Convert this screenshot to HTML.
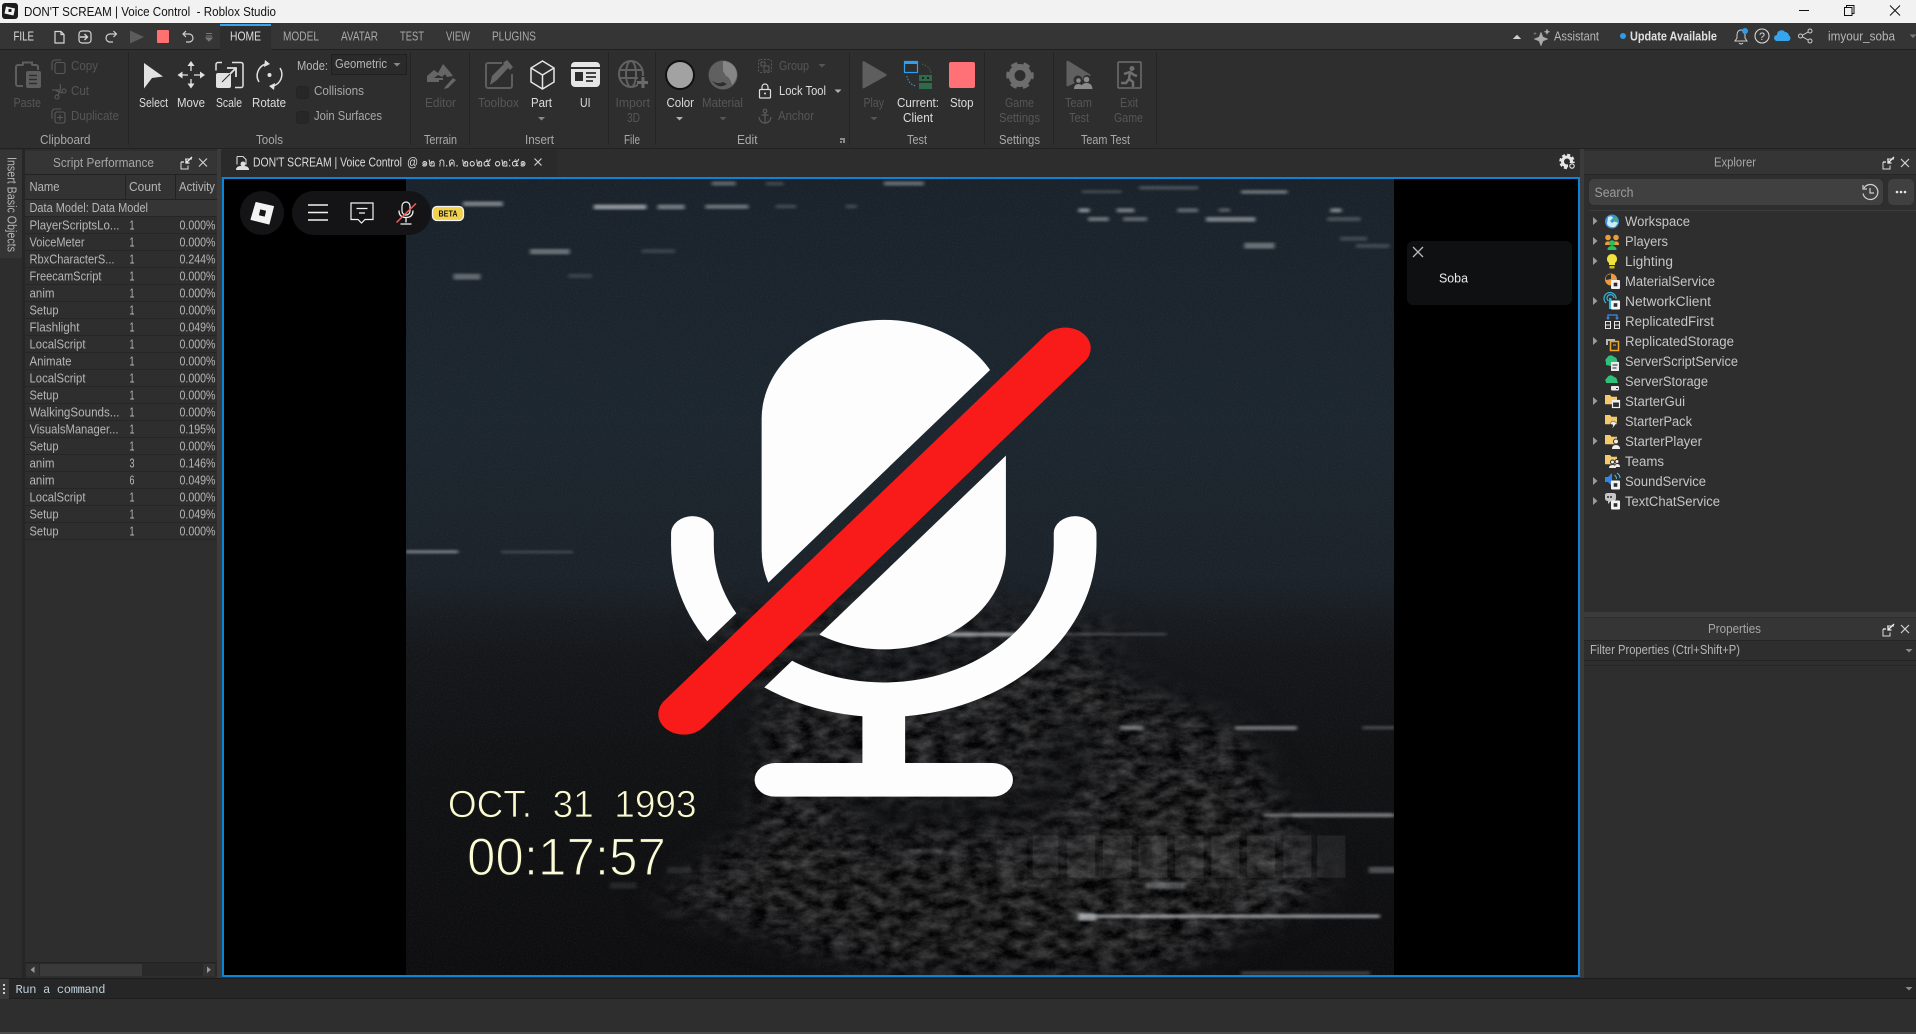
<!DOCTYPE html>
<html lang="en"><head><meta charset="utf-8"><title>DON'T SCREAM | Voice Control - Roblox Studio</title>
<style>
html,body{margin:0;padding:0;background:#2e2e2e;width:1916px;height:1034px;overflow:hidden}
svg{display:block}
text{font-family:"Liberation Sans","Noto Sans CJK SC",sans-serif;font-size:12.5px;fill:#a8a8a8;white-space:pre}
.w{fill:#dcdcdc}.d{fill:#565656}.l{fill:#a9a9a9}.b{fill:#b6b6b6}.e{fill:#c6c6c6;font-size:13.5px}.h{fill:#a6a6a6;font-size:13px}
.sep{fill:#242424}
</style></head><body>
<svg xmlns="http://www.w3.org/2000/svg" width="1916" height="1034" viewBox="0 0 1916 1034">
<defs>
<linearGradient id="bg" x1="0" y1="0" x2="0" y2="1">
<stop offset="0" stop-color="#19222b"/><stop offset=".3" stop-color="#1c262f"/><stop offset=".5" stop-color="#1b2229"/><stop offset=".6" stop-color="#141619"/><stop offset=".72" stop-color="#111214"/><stop offset="1" stop-color="#0d0d0f"/>
</linearGradient>
<filter id="noise" x="0" y="0" width="100%" height="100%" color-interpolation-filters="sRGB"><feTurbulence type="fractalNoise" baseFrequency=".8" numOctaves="2" seed="4"/><feColorMatrix values="0 0 0 0 .5 0 0 0 0 .5 0 0 0 0 .5 1.2 0 0 0 -.52"/></filter>
<filter id="rock" x="0" y="0" width="100%" height="100%" color-interpolation-filters="sRGB"><feTurbulence type="fractalNoise" baseFrequency=".06 .1" numOctaves="5" seed="11"/><feColorMatrix values=".42 0 0 0 -.09 .42 0 0 0 -.09 .42 0 0 0 -.085 0 0 0 0 1"/></filter>
<filter id="b30"><feGaussianBlur stdDeviation="26"/></filter>
<filter id="b2"><feGaussianBlur stdDeviation="3 2.200"/></filter>
<mask id="rockMask" maskUnits="userSpaceOnUse" x="400" y="170" width="1000" height="810">
<g transform="translate(400 170) scale(.6378 .5166)" filter="url(#b30)">
<path fill="#fff" fill-opacity=".5" d="M470 880Q760 760 1130 880L1120 1000 560 1020Z"/>
<path fill="#fff" fill-opacity=".9" d="M560 1030L1060 960 1140 990 1320 1080 1460 1400 1200 1560 760 1560 400 1420 560 1260Z"/>
<path fill="#000" d="M660 1200H1000L920 1290H720Z"/>
<path fill="#000" fill-opacity=".7" d="M1040 1050L1110 1090 1020 1300 940 1250Z"/>
</g></mask>
<mask id="micCut" maskUnits="userSpaceOnUse" x="300" y="200" width="950" height="1100">
<rect x="300" y="200" width="950" height="1100" fill="#fff"/>
<path d="M1240 112L240 1296" stroke="#000" stroke-width="126"/>
</mask>
<clipPath id="ic"><rect x="406" y="179" width="988" height="796"/></clipPath>
<g id="badge"><rect x="-4.5" y="-4.5" width="9" height="9" rx="1" fill="#f2f2f2"/><rect x="-1.8" y="-1.8" width="3.6" height="3.6" fill="#2e2e2e"/></g>
<path id="folder" d="M0 0h5l1.5 1.8H12v7.4H0z" fill="#f3c96b"/>
<g id="float"><path d="M1 5v7h7V8.5M5 2h7" fill="none" stroke="#ddd" stroke-width="1"/><path d="M1 5h3M12 0L6 6M6 2.5V6h3.5" fill="none" stroke="#eee" stroke-width="1.3"/></g>
<path id="x" d="M0 0l8 8M8 0l-8 8" stroke="#cfcfcf" stroke-width="1.2" fill="none"/>
<path id="arr" d="M0 0l4.5 4-4.5 4z" fill="#9a9a9a"/>
<path id="dn" d="M-3.5 0h7l-3.500 3.500z"/>
</defs>

<!-- base -->
<rect width="1916" height="1034" fill="#2e2e2e"/>
<rect width="1916" height="23" fill="#f2f2f2"/>
<rect y="23" width="1916" height="26" fill="#353535"/>
<rect y="49" width="1916" height="1" fill="#202020"/>
<rect y="148" width="1916" height="1" fill="#222"/>

<!-- title bar -->
<rect x="2" y="3" width="16" height="16" rx="3" fill="#1b1b1b"/>
<path d="M6 6.500L15 8.500 13.500 15.500 4.500 13.500z" fill="#f2f2f2"/><rect x="8.500" y="9" width="3" height="3" fill="#1b1b1b"/>
<text x="24" y="16" textLength="252" lengthAdjust="spacingAndGlyphs" style="fill:#111;font-size:13px">DON'T SCREAM | Voice Control  - Roblox Studio</text>
<path d="M1799 10.500h10" stroke="#111" stroke-width="1"/>
<path d="M1844.500 7.500h7.500v8h-7.500zM1846.500 7V5.500h7.500v8h-2" fill="none" stroke="#111"/>
<path d="M1890 5.500l10 10M1900 5.500l-10 10" stroke="#111" stroke-width="1"/>

<!-- menu row -->
<text x="13.500" y="40.500" textLength="20.500" lengthAdjust="spacingAndGlyphs" class="w">FILE</text>
<path d="M55 31.500h6l3 3v8.500h-9zM61 31.500v3h3" fill="none" stroke="#d5d5d5" stroke-width="1.200"/>
<rect x="79" y="31" width="12" height="12" rx="3" fill="none" stroke="#d5d5d5" stroke-width="1.200"/><path d="M80 37h7M84.500 34l3 3-3 3" fill="none" stroke="#d5d5d5" stroke-width="1.400"/>
<path d="M116 34h-6a3.500 3.500 0 0 0 0 8h3M113.500 31l3 3-3 3" fill="none" stroke="#cfcfcf" stroke-width="1.200"/>
<path d="M130 30.500l14 6.500-14 6.500z" fill="#5c5c5c"/>
<rect x="157" y="30" width="12" height="13" rx="1" fill="#ff7070"/>
<path d="M183 34h6a3.500 3.500 0 0 1 0 8h-3M186 31l-3 3 3 3" fill="none" stroke="#cfcfcf" stroke-width="1.200"/>
<path d="M206 33.500h6M206 36h6M206 38l3 3 3-3z" stroke="#777" fill="#777"/>
<rect x="220" y="24" width="51" height="26" fill="#2e2e2e"/><rect x="220" y="24" width="51" height="2" fill="#35a5ee"/>
<text x="230" y="40.500" textLength="31" lengthAdjust="spacingAndGlyphs" class="w">HOME</text>
<text x="283" y="40.500" textLength="36" lengthAdjust="spacingAndGlyphs">MODEL</text>
<text x="341" y="40.500" textLength="37" lengthAdjust="spacingAndGlyphs">AVATAR</text>
<text x="400" y="40.500" textLength="24" lengthAdjust="spacingAndGlyphs">TEST</text>
<text x="446" y="40.500" textLength="24" lengthAdjust="spacingAndGlyphs">VIEW</text>
<text x="492" y="40.500" textLength="44" lengthAdjust="spacingAndGlyphs">PLUGINS</text>
<!-- right of menu -->
<path d="M1514 38.500l3-3 3 3z" fill="#cfcfcf" stroke="#cfcfcf"/>
<path d="M1541 32l2 5 5 2-5 2-2 5-2-5-5-2 5-2zM1547 29l.8 2 2 .8-2 .8-.8 2-.8-2-2-.8 2-.8zM1535 32v3M1533.500 33.500h3" fill="#aaa" stroke="#aaa" stroke-width=".4"/>
<text x="1554" y="40.500" textLength="45" lengthAdjust="spacingAndGlyphs" class="b">Assistant</text>
<circle cx="1623" cy="36" r="3" fill="#2f9bea"/>
<text x="1630" y="40.500" textLength="87" lengthAdjust="spacingAndGlyphs" style="fill:#e0e0e0;font-weight:700">Update Available</text>
<path d="M1741 30c-3 0-4 3-4 5v3l-2 3h12l-2-3v-3c0-2-1-5-4-5zM1739 43q2 2 4 0" fill="none" stroke="#cfcfcf"/><circle cx="1745" cy="31" r="3" fill="#2f9bea"/>
<circle cx="1762" cy="36" r="7" fill="none" stroke="#d5d5d5" stroke-width="1.100"/><text x="1759" y="40" textLength="6" lengthAdjust="spacingAndGlyphs" class="w" style="font-size:11px">?</text>
<path d="M1777 41a3 3 0 0 1 0-6 4.500 4.500 0 0 1 8-3 4 4 0 0 1 4 3.500 3 3 0 0 1-1 5.500z" fill="#35a5ee"/>
<path d="M1810 31l-9 5 9 5" fill="none" stroke="#cfcfcf"/><circle cx="1810" cy="31" r="2" fill="#353535" stroke="#cfcfcf"/><circle cx="1800.500" cy="36" r="2" fill="#353535" stroke="#cfcfcf"/><circle cx="1810" cy="41" r="2" fill="#353535" stroke="#cfcfcf"/>
<text x="1828" y="40.500" textLength="67" lengthAdjust="spacingAndGlyphs" class="b">imyour_soba</text>
<use href="#dn" x="1913" y="34.500" fill="#777"/>

<!-- ribbon separators -->
<rect class="sep" x="128" y="52" width="1" height="93"/><rect class="sep" x="410" y="52" width="1" height="93"/><rect class="sep" x="469" y="52" width="1" height="93"/><rect class="sep" x="608" y="52" width="1" height="93"/><rect class="sep" x="655" y="52" width="1" height="93"/><rect class="sep" x="849" y="52" width="1" height="93"/><rect class="sep" x="984" y="52" width="1" height="93"/><rect class="sep" x="1053" y="52" width="1" height="93"/><rect class="sep" x="1156" y="52" width="1" height="93"/>

<!-- clipboard -->
<g fill="none" stroke="#5e5e5e" stroke-width="2"><path d="M23 65h-5a2 2 0 0 0-2 2v17a2 2 0 0 0 2 2h5M32 65h4a2 2 0 0 1 2 2v3M23 65.500v-3h9v3"/></g>
<rect x="26" y="71" width="15" height="17" rx="2" fill="#5e5e5e"/><path d="M29 75.500h8M29 79.500h8M29 83.500h8" stroke="#2e2e2e" stroke-width="1.500"/>
<text x="13.500" y="107" textLength="27.500" lengthAdjust="spacingAndGlyphs" class="d">Paste</text>
<g fill="none" stroke="#5a5a5a" stroke-width="1.100"><rect x="55" y="62.500" width="10" height="11" rx="2"/><path d="M52 70v-7a3 3 0 0 1 3-3h6"/></g>
<text x="71" y="70" textLength="27" lengthAdjust="spacingAndGlyphs" class="d">Copy</text>
<g fill="none" stroke="#5a5a5a" stroke-width="1.100"><path d="M52 90h8M60 84c2 6-2 9-2 12M55 90l7 3"/><circle cx="57" cy="97" r="2"/><circle cx="64" cy="91" r="2"/></g>
<text x="71" y="95" textLength="18" lengthAdjust="spacingAndGlyphs" class="d">Cut</text>
<g fill="none" stroke="#5a5a5a" stroke-width="1.100"><rect x="55" y="112" width="10" height="11" rx="2"/><path d="M52 119v-7a3 3 0 0 1 3-3h6M60 114.500v6M57 117.500h6"/></g>
<text x="71" y="120" textLength="48" lengthAdjust="spacingAndGlyphs" class="d">Duplicate</text>
<text x="40" y="144" textLength="50.500" lengthAdjust="spacingAndGlyphs" class="l">Clipboard</text>

<!-- tools -->
<path d="M144 63L163 76.500 152 78 144 88.500z" fill="#e2e2e2"/>
<text x="139" y="107" textLength="29" lengthAdjust="spacingAndGlyphs" class="w">Select</text>
<g stroke="#e2e2e2" fill="none" stroke-width="1.300"><path d="M191 65v6M191 79v6M182 75h6M194 75h6"/></g><path d="M191 61l3.500 5h-7zM191 88.500l3.500-5h-7zM177.500 75l5-3.500v7zM205 75l-5-3.500v7z" fill="#e2e2e2"/>
<text x="177" y="107" textLength="28" lengthAdjust="spacingAndGlyphs" class="w">Move</text>
<path d="M222 62.500h-4a2 2 0 0 0-2 2v6M232 62.500h9a2 2 0 0 1 2 2v21a2 2 0 0 1-2 2h-6" fill="none" stroke="#e2e2e2" stroke-width="1.500"/>
<rect x="216" y="73" width="15" height="15" rx="2" fill="#e2e2e2"/><path d="M222 82l13-13M227 68h9v9" fill="none" stroke="#e2e2e2" stroke-width="1.800"/><path d="M222 82l8-8" stroke="#2e2e2e" stroke-width="1"/>
<text x="216" y="107" textLength="26" lengthAdjust="spacingAndGlyphs" class="w">Scale</text>
<path d="M259 82a12 12 0 0 1 7-18M280 68a12 12 0 0 1-7 18" fill="none" stroke="#e2e2e2" stroke-width="1.500"/><path d="M265 60l5 4-6 3zM274 90l-5-4 6-3z" fill="#e2e2e2"/><circle cx="269.500" cy="75" r="2" fill="#e2e2e2"/>
<text x="252" y="107" textLength="34" lengthAdjust="spacingAndGlyphs" class="w">Rotate</text>
<text x="297" y="70" textLength="31" lengthAdjust="spacingAndGlyphs" class="b">Mode:</text>
<rect x="331.500" y="54.500" width="75" height="20" fill="#2a2a2a" stroke="#202020"/>
<text x="335" y="68" textLength="52" lengthAdjust="spacingAndGlyphs" class="b">Geometric</text><use href="#dn" x="397" y="63" fill="#888"/>
<rect x="296.500" y="86.500" width="12" height="12" rx="3" fill="#272727" stroke="#242424"/>
<text x="314" y="95" textLength="50" lengthAdjust="spacingAndGlyphs">Collisions</text>
<rect x="296.500" y="111.500" width="12" height="12" rx="3" fill="#272727" stroke="#242424"/>
<text x="314" y="120" textLength="68" lengthAdjust="spacingAndGlyphs">Join Surfaces</text>
<text x="256" y="144" textLength="27" lengthAdjust="spacingAndGlyphs" class="l">Tools</text>

<!-- terrain -->
<path d="M427 80v-4l7-6 4 3 5-9 7 8 3 4-6 1-2-3-3 3-4-2-4 3h9v2z" fill="#666"/><path d="M428 76v5h11" stroke="#666" fill="none" stroke-width="2"/><path d="M445 87l8-9 3 2-8 8-4 1z" fill="#666"/>
<text x="425" y="107" textLength="31" lengthAdjust="spacingAndGlyphs" class="d">Editor</text>
<text x="424" y="144" textLength="33" lengthAdjust="spacingAndGlyphs" class="l">Terrain</text>

<!-- insert -->
<path d="M502 63h-14a2 2 0 0 0-2 2v21a2 2 0 0 0 2 2h22a2 2 0 0 0 2-2V74" fill="none" stroke="#5e5e5e" stroke-width="2"/>
<path d="M490 85l2-9 12-12 5 3-12 13z" fill="#666"/><path d="M503 63l4-3 6 7-3 3z" fill="#666"/>
<text x="478" y="107" textLength="41" lengthAdjust="spacingAndGlyphs" class="d">Toolbox</text>
<path d="M542.500 61L554 68v14l-11.500 7L531 82V68zM531 68l11.500 7 11.500-7M542.500 75v14" fill="none" stroke="#e6e6e6" stroke-width="1.500"/>
<text x="531" y="107" textLength="21" lengthAdjust="spacingAndGlyphs" class="w">Part</text><use href="#dn" x="541.500" y="117" fill="#888"/>
<rect x="571" y="62" width="29" height="25" rx="4" fill="#e6e6e6"/><rect x="571" y="67" width="29" height="2" fill="#2e2e2e"/><rect x="575" y="72" width="8" height="9" fill="#2e2e2e"/><path d="M586 73h10M586 77h10M586 81h7" stroke="#2e2e2e" stroke-width="1.800"/>
<text x="580" y="107" textLength="10.500" lengthAdjust="spacingAndGlyphs" class="w">UI</text>
<text x="525" y="144" textLength="29" lengthAdjust="spacingAndGlyphs" class="l">Insert</text>

<!-- file -->
<g fill="none" stroke="#616161" stroke-width="2"><ellipse cx="631" cy="74" rx="12" ry="13"/><ellipse cx="631" cy="74" rx="5" ry="13"/><path d="M619 70h24M619 78h24"/></g>
<rect x="638" y="76" width="6" height="13" fill="#2e2e2e"/><path d="M643 77v11M637 82.500h11" stroke="#6a6a6a" stroke-width="3"/>
<text x="615.500" y="107" textLength="34.500" lengthAdjust="spacingAndGlyphs" class="d">Import</text>
<text x="627" y="122" textLength="13" lengthAdjust="spacingAndGlyphs" class="d">3D</text>
<text x="624" y="144" textLength="16" lengthAdjust="spacingAndGlyphs" class="l">File</text>

<!-- edit -->
<ellipse cx="680" cy="75" rx="14" ry="14" fill="#a2a2a2" stroke="#111" stroke-width="2"/>
<text x="666.500" y="107" textLength="27.500" lengthAdjust="spacingAndGlyphs" class="w">Color</text><use href="#dn" x="679.500" y="117" fill="#b0b0b0"/>
<ellipse cx="723" cy="75" rx="14.500" ry="14.500" fill="#606060"/><path d="M723 61a14 14 0 0 1 14 14q-1 6-5 10-2-8-6-9l-3-5z" fill="#868686"/><path d="M711 80q6 5 12 2l4 2q-7 5-13-1z" fill="#2e2e2e"/>
<text x="702" y="107" textLength="41" lengthAdjust="spacingAndGlyphs" class="d">Material</text><use href="#dn" x="723" y="117" fill="#555"/>
<rect x="758.500" y="59.500" width="13" height="13" rx="2" fill="none" stroke="#5a5a5a" stroke-dasharray="2 1.500"/><rect x="764" y="66" width="5" height="5" fill="none" stroke="#5a5a5a"/><rect x="761" y="62" width="4" height="4" fill="none" stroke="#5a5a5a"/>
<text x="779" y="70" textLength="30" lengthAdjust="spacingAndGlyphs" class="d">Group</text><use href="#dn" x="822" y="64" fill="#555"/>
<rect x="759.500" y="89.500" width="11" height="8.500" rx="1" fill="none" stroke="#e0e0e0" stroke-width="1.200"/><path d="M762 89.500V87a3 3 0 0 1 6 0v2.500" fill="none" stroke="#e0e0e0" stroke-width="1.200"/><circle cx="765" cy="93.500" r="1" fill="#e0e0e0"/>
<text x="779" y="95" textLength="47" lengthAdjust="spacingAndGlyphs" class="w">Lock Tool</text><use href="#dn" x="838" y="89.500" fill="#b0b0b0"/>
<g fill="none" stroke="#5a5a5a" stroke-width="1.200"><circle cx="765" cy="111" r="1.800"/><path d="M765 113v10M761.500 115h7M759 117q1 6 6 6t6-6"/></g>
<text x="778" y="120" textLength="36" lengthAdjust="spacingAndGlyphs" class="d">Anchor</text>
<text x="737" y="144" textLength="20.500" lengthAdjust="spacingAndGlyphs" class="l">Edit</text>
<path d="M840 138h5v5h-2v-3h-3z" fill="#8a8a8a"/><rect x="840" y="141" width="2" height="2" fill="#8a8a8a"/>

<!-- test -->
<path d="M862.500 62.500q0-2 2-1L886 74q1.500 1 0 2L864.500 88q-2 1-2-1z" fill="#5e5e5e"/>
<text x="863.500" y="107" textLength="20.500" lengthAdjust="spacingAndGlyphs" class="d">Play</text><use href="#dn" x="874" y="117" fill="#555"/>
<rect x="904.500" y="61.500" width="13" height="11" fill="none" stroke="#2fa0f0" stroke-width="1.200"/><rect x="904" y="61" width="14" height="3" fill="#2fa0f0"/>
<path d="M922 64q8 2 9 9" fill="none" stroke="#2d6b4e" stroke-dasharray="1.500 1.500"/><path d="M907 76q1 8 9 10" fill="none" stroke="#2fa0f0" stroke-dasharray="1.500 1.500"/>
<rect x="919" y="75" width="13" height="6" fill="#2f6a4a"/><rect x="919" y="83" width="13" height="6" fill="#2f6a4a"/><circle cx="923" cy="78" r="1" fill="#111"/><circle cx="928" cy="78" r="1" fill="#111"/>
<text x="897" y="107" textLength="42" lengthAdjust="spacingAndGlyphs" class="w">Current:</text>
<text x="903" y="122" textLength="30" lengthAdjust="spacingAndGlyphs" class="w">Client</text>
<rect x="949" y="62" width="26" height="26" rx="2" fill="#ff7176"/>
<text x="950" y="107" textLength="23.500" lengthAdjust="spacingAndGlyphs" class="w">Stop</text>
<text x="907" y="144" textLength="20" lengthAdjust="spacingAndGlyphs" class="l">Test</text>

<!-- settings -->
<circle cx="1020" cy="75.500" r="8.500" fill="none" stroke="#6d6d6d" stroke-width="6"/><circle cx="1020" cy="75.500" r="12" fill="none" stroke="#6d6d6d" stroke-width="3.500" stroke-dasharray="6.500 6.070" transform="rotate(-15 1020 75.500)"/>
<text x="1005" y="107" textLength="29" lengthAdjust="spacingAndGlyphs" class="d">Game</text>
<text x="999" y="122" textLength="41" lengthAdjust="spacingAndGlyphs" class="d">Settings</text>
<text x="999" y="144" textLength="41" lengthAdjust="spacingAndGlyphs" class="l">Settings</text>

<!-- team test -->
<path d="M1066.500 62q0-2 2-1l21 13q2 1.500 0 2.500l-21 9.500q-2 1-2-1z" fill="#606060"/>
<circle cx="1078" cy="80" r="3" fill="#2e2e2e" stroke="#2e2e2e" stroke-width="3"/><circle cx="1087" cy="79" r="4" fill="#2e2e2e"/>
<circle cx="1078.500" cy="80.500" r="2.300" fill="#8a8a8a"/><circle cx="1086.500" cy="79.500" r="2.800" fill="#8a8a8a"/><path d="M1074 89q0-5 4.500-5t4.500 5zM1081 89q0-6 5.500-6t6 6z" fill="#8a8a8a"/>
<text x="1065" y="107" textLength="27" lengthAdjust="spacingAndGlyphs" class="d">Team</text>
<text x="1069" y="122" textLength="20" lengthAdjust="spacingAndGlyphs" class="d">Test</text>
<rect x="1118" y="62" width="23" height="26" rx="1" fill="none" stroke="#6f6f6f" stroke-width="1.500"/>
<circle cx="1132" cy="68.500" r="2.500" fill="#6f6f6f"/><path d="M1124 74l6-2 4 3 3 1M1130 72l-1 7 4 3v5M1129 79l-3 4-5 0" fill="none" stroke="#6f6f6f" stroke-width="2.500"/>
<text x="1120" y="107" textLength="18" lengthAdjust="spacingAndGlyphs" class="d">Exit</text>
<text x="1114" y="122" textLength="29" lengthAdjust="spacingAndGlyphs" class="d">Game</text>
<text x="1081" y="144" textLength="49" lengthAdjust="spacingAndGlyphs" class="l">Team Test</text>

<!-- panel frame colors -->
<rect y="149" width="1916" height="830" fill="#2d2d2d"/>
<rect x="217" y="149" width="5" height="830" fill="#3b3b3b"/>
<rect x="1580" y="149" width="4" height="830" fill="#3b3b3b"/>
<rect x="22" y="149" width="3" height="830" fill="#262626"/>

<!-- left insert tab -->
<rect x="0" y="150" width="22" height="108" fill="#353535"/>
<text transform="translate(7.500 157) rotate(90)" textLength="95" lengthAdjust="spacingAndGlyphs" class="b" style="font-size:12.500px">Insert Basic Objects</text>

<!-- script performance -->
<rect x="25" y="150" width="192" height="827" fill="#2e2e2e"/>
<rect x="25" y="151" width="192" height="24" fill="#353535"/><rect x="25" y="174" width="192" height="1" fill="#222"/>
<text x="53" y="167" textLength="101" lengthAdjust="spacingAndGlyphs" class="h">Script Performance</text>
<use href="#float" x="180" y="157"/><use href="#x" x="199" y="158.500"/>
<rect x="25" y="175" width="192" height="25" fill="#333"/><rect x="25" y="199" width="192" height="1" fill="#222"/><rect x="125" y="175" width="1" height="25" fill="#222"/><rect x="175" y="175" width="1" height="25" fill="#222"/>
<g class="txt">
<text x="29.500" y="191" textLength="30" lengthAdjust="spacingAndGlyphs" class="b">Name</text>
<text x="129" y="191" textLength="32" lengthAdjust="spacingAndGlyphs" class="b">Count</text>
<text x="179" y="191" textLength="36" lengthAdjust="spacingAndGlyphs" class="b">Activity</text>
</g>
<rect x="25" y="200" width="192" height="16" fill="#353535"/>
<text x="29.500" y="212" textLength="118.500" lengthAdjust="spacingAndGlyphs" class="b">Data Model: Data Model</text>
<g fill="#262626"><rect x="25" y="216" width="192" height="1"/><rect x="25" y="233" width="192" height="1"/><rect x="25" y="250" width="192" height="1"/><rect x="25" y="267" width="192" height="1"/><rect x="25" y="284" width="192" height="1"/><rect x="25" y="301" width="192" height="1"/><rect x="25" y="318" width="192" height="1"/><rect x="25" y="335" width="192" height="1"/><rect x="25" y="352" width="192" height="1"/><rect x="25" y="369" width="192" height="1"/><rect x="25" y="386" width="192" height="1"/><rect x="25" y="403" width="192" height="1"/><rect x="25" y="420" width="192" height="1"/><rect x="25" y="437" width="192" height="1"/><rect x="25" y="454" width="192" height="1"/><rect x="25" y="471" width="192" height="1"/><rect x="25" y="488" width="192" height="1"/><rect x="25" y="505" width="192" height="1"/><rect x="25" y="522" width="192" height="1"/><rect x="25" y="539" width="192" height="1"/></g>

<text x="29.500" y="229.500" textLength="90" lengthAdjust="spacingAndGlyphs" class="b">PlayerScriptsLo...</text><text x="129.500" y="229.500" textLength="5" lengthAdjust="spacingAndGlyphs" class="b">1</text><text x="179.500" y="229.500" textLength="36" lengthAdjust="spacingAndGlyphs" class="b">0.000%</text>
<text x="29.500" y="246.500" textLength="55" lengthAdjust="spacingAndGlyphs" class="b">VoiceMeter</text><text x="129.500" y="246.500" textLength="5" lengthAdjust="spacingAndGlyphs" class="b">1</text><text x="179.500" y="246.500" textLength="36" lengthAdjust="spacingAndGlyphs" class="b">0.000%</text>
<text x="29.500" y="263.500" textLength="85" lengthAdjust="spacingAndGlyphs" class="b">RbxCharacterS...</text><text x="129.500" y="263.500" textLength="5" lengthAdjust="spacingAndGlyphs" class="b">1</text><text x="179.500" y="263.500" textLength="36" lengthAdjust="spacingAndGlyphs" class="b">0.244%</text>
<text x="29.500" y="280.500" textLength="72" lengthAdjust="spacingAndGlyphs" class="b">FreecamScript</text><text x="129.500" y="280.500" textLength="5" lengthAdjust="spacingAndGlyphs" class="b">1</text><text x="179.500" y="280.500" textLength="36" lengthAdjust="spacingAndGlyphs" class="b">0.000%</text>
<text x="29.500" y="297.500" textLength="25" lengthAdjust="spacingAndGlyphs" class="b">anim</text><text x="129.500" y="297.500" textLength="5" lengthAdjust="spacingAndGlyphs" class="b">1</text><text x="179.500" y="297.500" textLength="36" lengthAdjust="spacingAndGlyphs" class="b">0.000%</text>
<text x="29.500" y="314.500" textLength="29" lengthAdjust="spacingAndGlyphs" class="b">Setup</text><text x="129.500" y="314.500" textLength="5" lengthAdjust="spacingAndGlyphs" class="b">1</text><text x="179.500" y="314.500" textLength="36" lengthAdjust="spacingAndGlyphs" class="b">0.000%</text>
<text x="29.500" y="331.500" textLength="50" lengthAdjust="spacingAndGlyphs" class="b">Flashlight</text><text x="129.500" y="331.500" textLength="5" lengthAdjust="spacingAndGlyphs" class="b">1</text><text x="179.500" y="331.500" textLength="36" lengthAdjust="spacingAndGlyphs" class="b">0.049%</text>
<text x="29.500" y="348.500" textLength="56" lengthAdjust="spacingAndGlyphs" class="b">LocalScript</text><text x="129.500" y="348.500" textLength="5" lengthAdjust="spacingAndGlyphs" class="b">1</text><text x="179.500" y="348.500" textLength="36" lengthAdjust="spacingAndGlyphs" class="b">0.000%</text>
<text x="29.500" y="365.500" textLength="42" lengthAdjust="spacingAndGlyphs" class="b">Animate</text><text x="129.500" y="365.500" textLength="5" lengthAdjust="spacingAndGlyphs" class="b">1</text><text x="179.500" y="365.500" textLength="36" lengthAdjust="spacingAndGlyphs" class="b">0.000%</text>
<text x="29.500" y="382.500" textLength="56" lengthAdjust="spacingAndGlyphs" class="b">LocalScript</text><text x="129.500" y="382.500" textLength="5" lengthAdjust="spacingAndGlyphs" class="b">1</text><text x="179.500" y="382.500" textLength="36" lengthAdjust="spacingAndGlyphs" class="b">0.000%</text>
<text x="29.500" y="399.500" textLength="29" lengthAdjust="spacingAndGlyphs" class="b">Setup</text><text x="129.500" y="399.500" textLength="5" lengthAdjust="spacingAndGlyphs" class="b">1</text><text x="179.500" y="399.500" textLength="36" lengthAdjust="spacingAndGlyphs" class="b">0.000%</text>
<text x="29.500" y="416.500" textLength="90" lengthAdjust="spacingAndGlyphs" class="b">WalkingSounds...</text><text x="129.500" y="416.500" textLength="5" lengthAdjust="spacingAndGlyphs" class="b">1</text><text x="179.500" y="416.500" textLength="36" lengthAdjust="spacingAndGlyphs" class="b">0.000%</text>
<text x="29.500" y="433.500" textLength="89" lengthAdjust="spacingAndGlyphs" class="b">VisualsManager...</text><text x="129.500" y="433.500" textLength="5" lengthAdjust="spacingAndGlyphs" class="b">1</text><text x="179.500" y="433.500" textLength="36" lengthAdjust="spacingAndGlyphs" class="b">0.195%</text>
<text x="29.500" y="450.500" textLength="29" lengthAdjust="spacingAndGlyphs" class="b">Setup</text><text x="129.500" y="450.500" textLength="5" lengthAdjust="spacingAndGlyphs" class="b">1</text><text x="179.500" y="450.500" textLength="36" lengthAdjust="spacingAndGlyphs" class="b">0.000%</text>
<text x="29.500" y="467.500" textLength="25" lengthAdjust="spacingAndGlyphs" class="b">anim</text><text x="129.500" y="467.500" textLength="5" lengthAdjust="spacingAndGlyphs" class="b">3</text><text x="179.500" y="467.500" textLength="36" lengthAdjust="spacingAndGlyphs" class="b">0.146%</text>
<text x="29.500" y="484.500" textLength="25" lengthAdjust="spacingAndGlyphs" class="b">anim</text><text x="129.500" y="484.500" textLength="5" lengthAdjust="spacingAndGlyphs" class="b">6</text><text x="179.500" y="484.500" textLength="36" lengthAdjust="spacingAndGlyphs" class="b">0.049%</text>
<text x="29.500" y="501.500" textLength="56" lengthAdjust="spacingAndGlyphs" class="b">LocalScript</text><text x="129.500" y="501.500" textLength="5" lengthAdjust="spacingAndGlyphs" class="b">1</text><text x="179.500" y="501.500" textLength="36" lengthAdjust="spacingAndGlyphs" class="b">0.000%</text>
<text x="29.500" y="518.500" textLength="29" lengthAdjust="spacingAndGlyphs" class="b">Setup</text><text x="129.500" y="518.500" textLength="5" lengthAdjust="spacingAndGlyphs" class="b">1</text><text x="179.500" y="518.500" textLength="36" lengthAdjust="spacingAndGlyphs" class="b">0.049%</text>
<text x="29.500" y="535.500" textLength="29" lengthAdjust="spacingAndGlyphs" class="b">Setup</text><text x="129.500" y="535.500" textLength="5" lengthAdjust="spacingAndGlyphs" class="b">1</text><text x="179.500" y="535.500" textLength="36" lengthAdjust="spacingAndGlyphs" class="b">0.000%</text>

<!-- scrollbar -->
<rect x="25" y="963" width="192" height="13" fill="#292929"/><rect x="25" y="962" width="192" height="1" fill="#232323"/>
<rect x="26" y="964" width="13" height="12" fill="#333"/><path d="M34.500 966.500v6.500l-4-3.250z" fill="#999"/>
<rect x="40" y="964" width="102" height="12" fill="#3a3a3a"/>
<rect x="203" y="964" width="12" height="12" fill="#333"/><path d="M207 966.500v6.500l4-3.250z" fill="#999"/>

<!-- document tab row -->
<rect x="221" y="150" width="336" height="27" fill="#2a2a2a"/>
<path d="M237 156.500h6l3 3v5M237 156.500v8" fill="none" stroke="#d8d8d8" stroke-width="1.100"/><path d="M236 170q0-4 5-4h3q5 0 5 4z" fill="#e0e0e0"/><circle cx="243" cy="164" r="2.500" fill="#e0e0e0"/>
<text x="253" y="166.500" textLength="149" lengthAdjust="spacingAndGlyphs" class="w">DON'T SCREAM | Voice Control</text>
<text x="407" y="166.500" textLength="119.500" lengthAdjust="spacingAndGlyphs" class="w">@ ๑๒ ก.ค. ๒๐๒๕ ๐๒:๕๑</text>
<path d="M534.500 158.500l7 7M541.500 158.500l-7 7" stroke="#d5d5d5" stroke-width="1.100"/>
<circle cx="1567" cy="161.500" r="4.500" fill="none" stroke="#e6e6e6" stroke-width="3"/><circle cx="1567" cy="161.500" r="6.500" fill="none" stroke="#e6e6e6" stroke-width="2.500" stroke-dasharray="3 2.100"/><rect x="1568" y="163" width="7" height="6" fill="#2d2d2d"/><circle cx="1572" cy="166" r="2.200" fill="none" stroke="#e6e6e6" stroke-width="1.100"/>

<!-- viewport -->
<rect x="222" y="177" width="1358" height="800" fill="#0b84d8"/>
<rect x="224" y="179" width="1354" height="796" fill="#000"/>
<g clip-path="url(#ic)">
<rect x="406" y="179" width="988" height="796" fill="url(#bg)"/>
<g mask="url(#rockMask)"><rect x="406" y="179" width="988" height="796" filter="url(#rock)"/></g>
<rect x="406" y="179" width="988" height="796" filter="url(#noise)" opacity=".22"/>
<g transform="translate(400 170) scale(.6378 .5166)">
<g filter="url(#b2)" fill="#dfe3e6" stroke="#dfe3e6" stroke-width="2.500" opacity=".72">
<rect x="100" y="62" width="60" height="7" opacity=".65"/><rect x="305" y="68" width="80" height="7" opacity=".8"/><rect x="405" y="68" width="40" height="7" opacity=".6"/><rect x="480" y="68" width="65" height="6" opacity=".55"/><rect x="590" y="68" width="30" height="5" opacity=".25"/><rect x="700" y="68" width="15" height="5" opacity=".25"/>
<rect x="490" y="23" width="35" height="6" opacity=".45"/><rect x="575" y="24" width="25" height="5" opacity=".25"/><rect x="760" y="23" width="60" height="6" opacity=".5"/>
<rect x="1070" y="40" width="60" height="4" opacity=".25"/><rect x="1160" y="32" width="90" height="5" opacity=".3"/><rect x="1320" y="40" width="70" height="5" opacity=".55"/>
<rect x="1065" y="75" width="15" height="6" opacity=".7"/><rect x="1125" y="75" width="25" height="6" opacity=".6"/><rect x="1220" y="75" width="30" height="6" opacity=".45"/><rect x="1285" y="75" width="15" height="5" opacity=".4"/><rect x="1460" y="75" width="15" height="6" opacity=".65"/>
<rect x="1080" y="92" width="30" height="6" opacity=".55"/><rect x="1135" y="92" width="35" height="6" opacity=".45"/><rect x="1265" y="92" width="75" height="7" opacity=".65"/><rect x="1455" y="92" width="50" height="6" opacity=".3"/>
<rect x="1325" y="142" width="45" height="9" opacity=".55"/><rect x="1475" y="130" width="40" height="6" opacity=".25"/><rect x="1500" y="144" width="50" height="6" opacity=".25"/>
<rect x="205" y="154" width="60" height="8" opacity=".55"/><rect x="380" y="154" width="50" height="6" opacity=".2"/>
<rect x="85" y="202" width="40" height="9" opacity=".5"/><rect x="265" y="202" width="35" height="6" opacity=".2"/>
<rect x="10" y="737" width="80" height="4" opacity=".6"/><rect x="160" y="738" width="110" height="3" opacity=".25"/>
<rect x="630" y="897" width="570" height="3" opacity=".28"/><rect x="860" y="896" width="140" height="6" opacity=".7"/>
<rect x="1130" y="1077" width="35" height="6" opacity=".55"/><rect x="1310" y="1077" width="95" height="6" opacity=".6"/><rect x="1510" y="1077" width="50" height="5" opacity=".3"/>
<rect x="1355" y="1247" width="205" height="4" opacity=".5"/><rect x="1400" y="1245" width="155" height="7" opacity=".35"/>
<rect x="1065" y="1442" width="470" height="5" opacity=".75"/><rect x="1065" y="1440" width="25" height="12" opacity=".8"/>
<rect x="1520" y="1350" width="40" height="10" opacity=".4"/><rect x="1170" y="1380" width="60" height="10" opacity=".4"/><rect x="1360" y="1385" width="40" height="12" opacity=".2"/>
<rect x="330" y="1380" width="40" height="10" opacity=".15"/><rect x="420" y="1350" width="35" height="10" opacity=".15"/><rect x="800" y="1315" width="50" height="8" opacity=".2"/>
<rect x="1320" y="1552" width="200" height="5" opacity=".3"/>
</g>
<g fill="#fff" fill-opacity=".075"><rect x="935" y="1288" width="48" height="82" opacity=".5"/><rect x="992" y="1288" width="40" height="82" opacity=".8"/><rect x="1046" y="1288" width="44" height="82"/><rect x="1102" y="1288" width="45" height="82"/><rect x="1158" y="1288" width="45" height="82"/><rect x="1215" y="1288" width="45" height="82"/><rect x="1272" y="1288" width="44" height="82"/><rect x="1328" y="1288" width="44" height="82"/><rect x="1385" y="1288" width="44" height="82"/><rect x="1438" y="1288" width="44" height="82"/></g>
<!-- microphone -->
<g mask="url(#micCut)" fill="#fdfdfd">
<rect x="567" y="290" width="383" height="638" rx="191.500" ry="191.500"/>
<path d="M458.500 703.500V725.500A300 300 0 0 0 1058.500 725.500V703.500" fill="none" stroke="#fdfdfd" stroke-width="67" stroke-linecap="round"/>
</g>
<rect x="725" y="1040" width="67" height="120" fill="#fdfdfd"/>
<rect x="556" y="1148" width="405" height="65" rx="32" fill="#fdfdfd"/>
<path d="M1043 345L445 1053" stroke="#f91a1a" stroke-width="80" stroke-linecap="round"/>
<!-- date -->
<text x="75" y="1252" textLength="390" lengthAdjust="spacingAndGlyphs" style="font-size:74px;fill:#fcfbcf;stroke:#15171a;stroke-width:1.500px">OCT.  31  1993</text>
<text x="105" y="1365" textLength="312" lengthAdjust="spacingAndGlyphs" style="font-size:103px;fill:#fdfcd4;stroke:#15171a;stroke-width:2.500px">00:17:57</text>
</g>
</g>

<!-- HUD -->
<circle cx="262" cy="213" r="22" fill="#141416"/>
<path d="M256 202.500L273.500 206.500 269 224 251 219.500z" fill="#f2f2f2" stroke="#f2f2f2" stroke-linejoin="round"/><rect x="259.500" y="210" width="6" height="6" fill="#141416" transform="rotate(13 262.500 213)"/>
<rect x="292" y="191" width="139" height="44" rx="22" fill="#141416"/>
<path d="M308 205h20M308 212.500h20M308 220h20" stroke="#f2f2f2" stroke-width="1.600"/>
<path d="M351 203h22v16.500h-8l-3.500 3.500-3.500-3.500h-7z" fill="none" stroke="#f2f2f2" stroke-width="1.200"/><path d="M356.500 208.500h11M359 213h6" stroke="#f2f2f2" stroke-width="1.300"/>
<rect x="402" y="202" width="8" height="13" rx="4" fill="none" stroke="#f2f2f2" stroke-width="1.200"/><path d="M399 210.500q0 7 7 7t7-7M406 217.500v5M400.500 224h11" fill="none" stroke="#f2f2f2" stroke-width="1.300"/>
<path d="M416 203.500L396.500 222.500" stroke="#fb5a5a" stroke-width="1.500"/>
<rect x="432.500" y="206.500" width="31" height="14" rx="4.500" fill="#f2d14c" stroke="#f4f4f4" stroke-width="1.300"/>
<text x="438.500" y="216.500" textLength="19" lengthAdjust="spacingAndGlyphs" style="font-size:8.500px;font-weight:700;fill:#141414">BETA</text>

<!-- toast -->
<rect x="1407" y="241" width="165" height="64" rx="6" fill="#0f1012"/>
<path d="M1413 247l10 10M1423 247l-10 10" stroke="#b8b8b8" stroke-width="1.300"/>
<text x="1439" y="282.500" textLength="29" lengthAdjust="spacingAndGlyphs" style="font-size:13px;fill:#eaeaea">Soba</text>

<!-- explorer -->
<rect x="1584" y="150" width="332" height="462" fill="#2e2e2e"/>
<rect x="1584" y="151" width="332" height="23" fill="#353535"/><rect x="1584" y="174" width="332" height="1" fill="#262626"/>
<text x="1714" y="166.500" textLength="42" lengthAdjust="spacingAndGlyphs" class="h">Explorer</text>
<use href="#float" x="1882" y="157"/><use href="#x" x="1901" y="159"/>
<rect x="1589" y="179" width="294" height="26" rx="5" fill="#404040"/>
<rect x="1888" y="179" width="26" height="26" rx="5" fill="#404040"/>
<text x="1594.500" y="197" textLength="39" lengthAdjust="spacingAndGlyphs" style="fill:#9c9c9c;font-size:13.500px">Search</text>
<path d="M1864 188a7.500 7.500 0 1 1-1 5.500M1870 188v5h4" fill="none" stroke="#d0d0d0" stroke-width="1.200"/><path d="M1863 185v4h4" fill="none" stroke="#d0d0d0" stroke-width="1.200"/>
<g fill="#e6e6e6"><circle cx="1897" cy="192" r="1.300"/><circle cx="1901" cy="192" r="1.300"/><circle cx="1905" cy="192" r="1.300"/></g>
<rect x="1589" y="210" width="327" height="1" fill="#3c3c3c"/>

<use href="#arr" x="1593" y="217"/><use href="#arr" x="1593" y="237"/><use href="#arr" x="1593" y="257"/><use href="#arr" x="1593" y="297"/><use href="#arr" x="1593" y="337"/><use href="#arr" x="1593" y="397"/><use href="#arr" x="1593" y="437"/><use href="#arr" x="1593" y="477"/><use href="#arr" x="1593" y="497"/>

<text x="1625" y="226" textLength="65" lengthAdjust="spacingAndGlyphs" class="e">Workspace</text>
<text x="1625" y="246" textLength="43" lengthAdjust="spacingAndGlyphs" class="e">Players</text>
<text x="1625" y="266" textLength="48" lengthAdjust="spacingAndGlyphs" class="e">Lighting</text>
<text x="1625" y="286" textLength="90" lengthAdjust="spacingAndGlyphs" class="e">MaterialService</text>
<text x="1625" y="306" textLength="86" lengthAdjust="spacingAndGlyphs" class="e">NetworkClient</text>
<text x="1625" y="326" textLength="89" lengthAdjust="spacingAndGlyphs" class="e">ReplicatedFirst</text>
<text x="1625" y="346" textLength="109" lengthAdjust="spacingAndGlyphs" class="e">ReplicatedStorage</text>
<text x="1625" y="366" textLength="113" lengthAdjust="spacingAndGlyphs" class="e">ServerScriptService</text>
<text x="1625" y="386" textLength="83" lengthAdjust="spacingAndGlyphs" class="e">ServerStorage</text>
<text x="1625" y="406" textLength="60" lengthAdjust="spacingAndGlyphs" class="e">StarterGui</text>
<text x="1625" y="426" textLength="67" lengthAdjust="spacingAndGlyphs" class="e">StarterPack</text>
<text x="1625" y="446" textLength="77" lengthAdjust="spacingAndGlyphs" class="e">StarterPlayer</text>
<text x="1625" y="466" textLength="39" lengthAdjust="spacingAndGlyphs" class="e">Teams</text>
<text x="1625" y="486" textLength="81" lengthAdjust="spacingAndGlyphs" class="e">SoundService</text>
<text x="1625" y="506" textLength="95" lengthAdjust="spacingAndGlyphs" class="e">TextChatService</text>

<!-- explorer icons -->
<circle cx="1612" cy="221.500" r="7" fill="#3f8fe0"/><path d="M1608 217q4-2 5 1l-3 3 2 2 3-2 3 2-3 4q-6 1-8-3z" fill="#c9ecf5"/><path d="M1613 218l4 0 1 4-3 0z" fill="#3fb56a"/>
<circle cx="1608" cy="237.500" r="2.800" fill="#ee9a3a"/><circle cx="1616" cy="237.500" r="2.800" fill="#ee9a3a"/><path d="M1605 245q0-3 2-3.500h3v3.500zM1614 241.500h3q2 .5 2 3.500h-5z" fill="#ee9a3a"/><circle cx="1612" cy="243" r="2.800" fill="#27c05a"/><path d="M1607.500 250q0-4 4.500-4t4.500 4z" fill="#27c05a"/>
<path d="M1612 254a5 5 0 0 1 3 9v2h-6v-2a5 5 0 0 1 3-9z" fill="#f0e23c"/><rect x="1609.500" y="266" width="5" height="2.500" fill="#c9bc2e"/>
<circle cx="1611" cy="279.500" r="6" fill="#ee9a3a"/><path d="M1611 274v5l-5 1q-.5-4 2-5z" fill="#2e2e2e"/><use href="#badge" x="1615.500" y="284.500"/>
<path d="M1606 303a6 6 0 1 1 10-4M1608.500 301a3.500 3.500 0 1 1 5.500-3" fill="none" stroke="#35b6d8" stroke-width="1.200"/><rect x="1609" y="298" width="2.500" height="11" fill="#35b6d8"/><use href="#badge" x="1615.500" y="305"/>
<path d="M1608 318v-3h9v3" fill="none" stroke="#3f88e0" stroke-width="1.300"/><path d="M1606 317.500l2 2.500 2-2.500zM1615 317.500l2 2.500 2-2.500z" fill="#3f88e0"/><g fill="none" stroke="#e6e6e6"><rect x="1605.500" y="321.500" width="5" height="7"/><rect x="1614.500" y="321.500" width="5" height="7"/></g><path d="M1605 325h6M1614 325h6" stroke="#e6e6e6"/>
<path d="M1606 339h9v2h-7v4h-2z" fill="#b8b8b8"/><rect x="1610.500" y="341.500" width="8" height="9" fill="none" stroke="#eda52a" stroke-width="1.500"/><path d="M1613 345h3" stroke="#eda52a"/>
<path d="M1606 362a2.500 2.500 0 0 1 1-4 4 4 0 0 1 7-1 3 3 0 0 1 3 3l1 3h-7v3l-5-1z" fill="#2fc07a"/><rect x="1611" y="362" width="8" height="9" fill="#eaeaea"/><path d="M1612.500 365h5M1612.500 368h4" stroke="#2e2e2e"/>
<path d="M1606 381a2.500 2.500 0 0 1 1-4 4 4 0 0 1 7-1 3 3 0 0 1 3 3l1 3h-12z" fill="#2fc07a" transform="translate(0 1)"/><rect x="1611" y="386" width="8" height="4.500" rx="1" fill="#eaeaea"/><rect x="1616" y="388" width="2" height="1" fill="#2e2e2e"/>

<use href="#folder" x="1605" y="395"/><rect x="1612.500" y="400.500" width="7" height="7" fill="#2e2e2e" stroke="#eee" stroke-width="1.200"/><rect x="1612" y="400" width="8" height="2.500" fill="#eee"/>
<use href="#folder" x="1605" y="415"/><path d="M1612 421l6 2-2 1-4 5 1-4-3-1z" fill="#eee" stroke="#2e2e2e" stroke-width=".5"/>
<use href="#folder" x="1605" y="435"/><circle cx="1616" cy="441.500" r="2.500" fill="#eee" stroke="#2e2e2e"/><path d="M1612 449q0-4 4-4t4 4z" fill="#eee"/>
<use href="#folder" x="1605" y="455"/><circle cx="1612.500" cy="462" r="2" fill="#eee" stroke="#2e2e2e"/><circle cx="1617" cy="461.500" r="2" fill="#eee" stroke="#2e2e2e"/><path d="M1609 468q0-3 3.500-3t3.500 3zM1615 467q0-3 2.500-3t2.500 3z" fill="#eee"/>
<path d="M1605 477h3l4-4v13l-4-4h-3z" fill="#2f87e8"/><path d="M1614.500 475q2 1.500 2 4M1617 473q3 2 3 5" fill="none" stroke="#5cc0e8"/><use href="#badge" x="1615.500" y="485"/>
<path d="M1605 495q0-2 3-2h5q3 0 3 2v3q0 3-3 3h-2l-3 3v-3q-3 0-3-3z" fill="#c6c6c6"/><g fill="#2e2e2e"><circle cx="1608" cy="497" r="1"/><circle cx="1611" cy="497" r="1"/></g><use href="#badge" x="1615.500" y="505"/>

<!-- properties -->
<rect x="1584" y="612" width="332" height="5" fill="#3b3b3b"/>
<rect x="1584" y="617" width="332" height="360" fill="#2e2e2e"/>
<rect x="1584" y="618" width="332" height="22" fill="#353535"/><rect x="1584" y="640" width="332" height="1" fill="#252525"/>
<text x="1708" y="633" textLength="53" lengthAdjust="spacingAndGlyphs" class="h">Properties</text>
<use href="#float" x="1882" y="624"/><use href="#x" x="1901" y="625"/>
<text x="1590" y="654" textLength="150" lengthAdjust="spacingAndGlyphs" class="b">Filter Properties (Ctrl+Shift+P)</text>
<use href="#dn" x="1909" y="649" fill="#8a8a8a"/>
<rect x="1584" y="660" width="332" height="1" fill="#242424"/><rect x="1584" y="665" width="332" height="1" fill="#262626"/>

<!-- command bar -->
<rect y="979" width="1916" height="20" fill="#262626"/><rect y="978" width="1916" height="1" fill="#1e1e1e"/><rect y="998" width="1916" height="1" fill="#1e1e1e"/>
<rect x="0" y="979" width="9" height="20" fill="#3a3a3a"/>
<g fill="#cfcfcf"><rect x="3" y="984" width="2" height="2"/><rect x="3" y="988" width="2" height="2"/><rect x="3" y="992" width="2" height="2"/></g>
<text x="15.500" y="993" textLength="90" style="font-family:'Liberation Mono',monospace;font-size:12px;fill:#bcd2dc">Run a command</text>
<use href="#dn" x="1909" y="987" fill="#8a8a8a"/>
<rect y="1032" width="1916" height="2" fill="#4a4a4a"/>
</svg>
</body></html>
